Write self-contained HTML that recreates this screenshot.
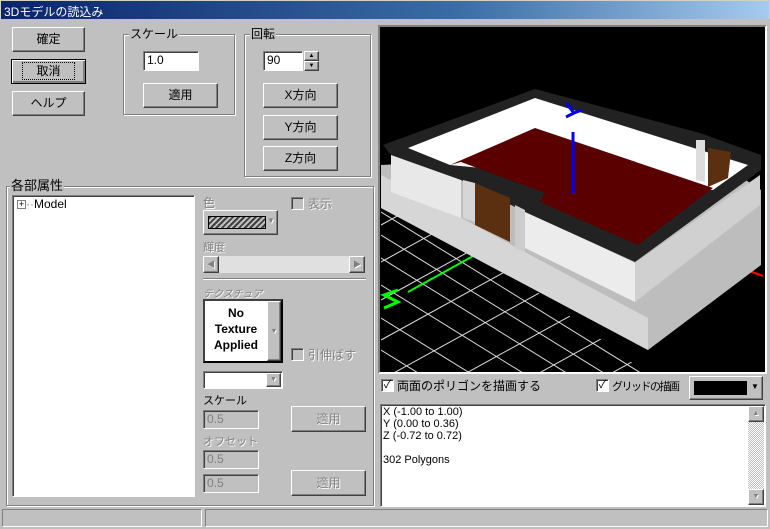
<!DOCTYPE html>
<html><head><meta charset="utf-8"><style>
*{box-sizing:border-box;margin:0;padding:0}
html{overflow:hidden;height:529px}
body{width:770px;height:529px;background:#c0c0c0;font-family:"Liberation Sans","Noto Sans CJK JP",sans-serif;font-size:12px;position:relative;overflow:hidden;color:#000}
.a{position:absolute}
.title{left:0;top:0;width:770px;height:19px;background:linear-gradient(90deg,#0a246a,#3a6ea5 60%,#a6caf0);color:#fff;font-size:12px;padding:2px 3px;border:1px solid #d4d0c8;border-bottom:none}
.btn{position:absolute;background:#c0c0c0;border:1px solid;border-color:#fff #404040 #404040 #fff;box-shadow:inset -1px -1px #808080;text-align:center;font-size:12px}
.dis{color:#808080;text-shadow:1px 1px #fff}
.grp{position:absolute;border:1px solid #808080;box-shadow:1px 1px #fff,inset 1px 1px #fff}
.lg{position:absolute;background:#c0c0c0;padding:0 1px;font-size:12px;top:-8px;left:6px;line-height:14px}
.edit{position:absolute;background:#fff;border:1px solid;border-color:#808080 #fff #fff #808080;box-shadow:inset 1px 1px #404040;font-size:12px;padding:2px 3px;line-height:13px;overflow:hidden}
.edit.d{background:#c0c0c0;color:#808080}
.cb{position:absolute;width:13px;height:13px;background:#fff;border:1px solid;border-color:#808080 #fff #fff #808080;box-shadow:inset 1px 1px #404040;font-size:11px;line-height:10px;text-align:center}
</style></head><body>
<div class="a title">3Dモデルの読込み</div>
<div class="btn" style="left:12px;top:27px;width:73px;height:25px;line-height:23px">確定</div>
<div class="btn" style="left:11px;top:59px;width:75px;height:25px;line-height:22px;border:1px solid #000;box-shadow:inset 1px 1px #fff,inset -2px -2px #808080"><span style="outline:1px dotted #000;padding:1px 13px">取消</span></div>
<div class="btn" style="left:12px;top:91px;width:73px;height:25px;line-height:23px">ヘルプ</div>

<div class="grp" style="left:123px;top:34px;width:112px;height:81px"><div class="lg" style="left:5px">スケール</div></div>
<div class="edit" style="left:143px;top:51px;width:56px;height:20px">1.0</div>
<div class="btn" style="left:143px;top:83px;width:75px;height:25px;line-height:23px">適用</div>

<div class="grp" style="left:244px;top:34px;width:127px;height:143px"><div class="lg" style="left:5px">回転</div></div>
<div class="edit" style="left:263px;top:51px;width:40px;height:20px">90</div>
<div class="btn" style="left:304px;top:51px;width:15px;height:10px;font-size:6px;line-height:8px">▲</div>
<div class="btn" style="left:304px;top:61px;width:15px;height:10px;font-size:6px;line-height:8px">▼</div>
<div class="btn" style="left:263px;top:83px;width:75px;height:25px;line-height:23px">X方向</div>
<div class="btn" style="left:263px;top:115px;width:75px;height:25px;line-height:23px">Y方向</div>
<div class="btn" style="left:263px;top:146px;width:75px;height:25px;line-height:23px">Z方向</div>

<div class="grp" style="left:6px;top:186px;width:368px;height:320px"><div class="lg" style="left:3px;font-size:13px">各部属性</div></div>
<div class="edit" style="left:12px;top:195px;width:183px;height:302px;padding:2px 4px"><span style="display:inline-block;width:9px;height:9px;border:1px solid #808080;font-size:9px;line-height:6px;text-align:center;vertical-align:middle">+</span><span style="color:#808080">··</span>Model</div>

<div class="a dis" style="left:203px;top:194px">色</div>
<div class="btn" style="left:203px;top:210px;width:75px;height:25px;box-shadow:inset -1px -1px #808080"><div class="a" style="left:4px;top:5px;width:58px;height:13px;border:1px solid #000;background:repeating-linear-gradient(135deg,#404040 0 2px,#c0c0c0 2px 4px)"></div><span class="a dis" style="left:63px;top:5px;font-size:8px">▼</span></div>
<div class="cb" style="left:291px;top:197px;background:#c0c0c0"></div>
<div class="a dis" style="left:308px;top:195px">表示</div>
<div class="a dis" style="left:203px;top:239px;font-size:11px">輝度</div>
<div class="a" style="left:203px;top:256px;width:162px;height:17px;background:#e0e0e0"></div>
<div class="btn dis" style="left:203px;top:256px;width:16px;height:17px;font-size:8px;line-height:15px">◀</div>
<div class="btn dis" style="left:349px;top:256px;width:16px;height:17px;font-size:8px;line-height:15px">▶</div>
<div class="a" style="left:203px;top:278px;width:163px;height:2px;border-top:1px solid #808080;border-bottom:1px solid #fff"></div>
<div class="a dis" style="left:203px;top:285px;font-size:10px;font-style:italic">テクスチュア</div>
<div class="a" style="left:203px;top:299px;width:80px;height:64px;background:#fff;border:2px solid #000;border-color:#404040 #000 #000 #404040"><div style="position:absolute;left:0;top:4px;width:62px;text-align:center;font-weight:bold;font-size:12px;line-height:16px">No<br>Texture<br>Applied</div><div class="btn dis" style="left:62px;top:0;width:14px;height:60px;font-size:7px;line-height:60px">▼</div></div>
<div class="cb" style="left:291px;top:348px;background:#c0c0c0"></div>
<div class="a dis" style="left:308px;top:346px">引伸ばす</div>
<div class="edit" style="left:203px;top:371px;width:80px;height:18px"><div class="btn dis" style="left:62px;top:1px;width:15px;height:14px;font-size:7px;line-height:12px">▼</div></div>
<div class="a" style="left:203px;top:392px;font-size:11px">スケール</div>
<div class="edit d" style="left:203px;top:410px;width:56px;height:19px">0.5</div>
<div class="btn dis" style="left:291px;top:406px;width:75px;height:26px;line-height:24px">適用</div>
<div class="a dis" style="left:203px;top:433px;font-size:11px">オフセット</div>
<div class="edit d" style="left:203px;top:450px;width:56px;height:19px">0.5</div>
<div class="edit d" style="left:203px;top:474px;width:56px;height:19px">0.5</div>
<div class="btn dis" style="left:291px;top:470px;width:75px;height:26px;line-height:24px">適用</div>

<div class="a" style="left:378px;top:25px;width:389px;height:349px;border:2px solid;border-color:#808080 #fff #fff #808080;background:#000;overflow:hidden">
<svg width="385" height="345" viewBox="380 27 385 345" style="display:block">
<defs><clipPath id="g"><polygon points="381,200 478,248 645,372 381,372"/></clipPath></defs>
<g stroke="#ddd" stroke-width="1" clip-path="url(#g)">
<line x1="381" y1="190" x2="770" y2="431"/><line x1="381" y1="212" x2="770" y2="453"/><line x1="381" y1="235" x2="770" y2="476"/><line x1="381" y1="258" x2="770" y2="499"/><line x1="381" y1="285" x2="770" y2="526"/><line x1="381" y1="318" x2="770" y2="559"/><line x1="381" y1="350" x2="770" y2="591"/>
<line x1="381" y1="225" x2="770" y2="11"/><line x1="381" y1="262" x2="770" y2="48"/><line x1="381" y1="300" x2="770" y2="86"/><line x1="381" y1="340" x2="770" y2="126"/><line x1="381" y1="380" x2="770" y2="166"/><line x1="381" y1="420" x2="770" y2="206"/><line x1="381" y1="460" x2="770" y2="246"/><line x1="381" y1="500" x2="770" y2="286"/>
</g>
<line x1="475" y1="255" x2="408" y2="292" stroke="#0f0" stroke-width="2"/>
<path d="M398 290 l-14 5 14 7 -14 6" stroke="#0f0" stroke-width="3" fill="none"/>
<line x1="741" y1="268" x2="763" y2="276" stroke="#f00" stroke-width="2"/>
<polygon points="381,165 381,208 648,350 761,265 761,190 700,150" fill="#bdbdbd"/>
<polygon points="381,175 381,208 648,350 648,318" fill="#d6d6d6"/>
<polygon points="391,153 461,178 461,218 391,192" fill="#e8e8e8"/>
<polygon points="525,210 635,263 635,302 525,248" fill="#ececec"/>
<polygon points="635,263 760,175 760,205 635,302" fill="#d0d0d0"/>
<polygon points="383,145 535,89 700,133 761,155 761,170 635,262 525,212 461,180 391,155" fill="#222"/>
<polygon points="408,148 535,98 748,165 713,190 450,165" fill="#fff"/>
<polygon points="450,165 535,128 713,188 638,245 540,202 545,193 461,162" fill="#5a0000"/>
<polygon points="696,140 705,140 705,182 696,180" fill="#ddd"/>
<polygon points="708,148 731,152 728,178 708,187" fill="#5a3010"/>
<polygon points="463,180 475,183 475,222 463,218" fill="#d6d6d6"/>
<polygon points="475,183 510,198 510,242 475,225" fill="#5a3010"/>
<polygon points="515,205 525,210 525,252 515,248" fill="#ccc"/>
<line x1="573" y1="132" x2="573" y2="193" stroke="#00f" stroke-width="3"/>
<path d="M566 103 l8 10 8 -3 M574 113 l-8 4" stroke="#00f" stroke-width="3" fill="none"/>
</svg></div>

<div class="cb" style="left:381px;top:379px">✓</div>
<div class="a" style="left:397px;top:377px">両面のポリゴンを描画する</div>
<div class="cb" style="left:596px;top:379px">✓</div>
<div class="a" style="left:612px;top:378px;font-size:11px;letter-spacing:-1.5px">グリッドの描画</div>
<div class="btn" style="left:689px;top:376px;width:74px;height:24px"><div class="a" style="left:4px;top:4px;width:53px;height:14px;background:#000"></div><span class="a" style="left:61px;top:5px;font-size:8px">▼</span></div>
<div class="edit" style="left:380px;top:404px;width:386px;height:103px;padding:1px 2px;line-height:12px;font-size:11px">X (-1.00 to 1.00)<br>Y (0.00 to 0.36)<br>Z (-0.72 to 0.72)<br><br>302 Polygons
<div class="a" style="right:1px;top:1px;width:16px;height:99px;background:repeating-conic-gradient(#c0c0c0 0 25%,#fff 0 50%) 0 0/2px 2px"></div>
<div class="btn dis" style="right:1px;top:1px;width:16px;height:16px;font-size:7px;line-height:14px">▲</div>
<div class="btn dis" style="right:1px;top:84px;width:16px;height:16px;font-size:7px;line-height:14px">▼</div></div>

<div class="a" style="left:2px;top:509px;width:200px;height:18px;border:1px solid;border-color:#808080 #fff #fff #808080"></div>
<div class="a" style="left:205px;top:509px;width:563px;height:18px;border:1px solid;border-color:#808080 #fff #fff #808080"></div>
</body></html>
